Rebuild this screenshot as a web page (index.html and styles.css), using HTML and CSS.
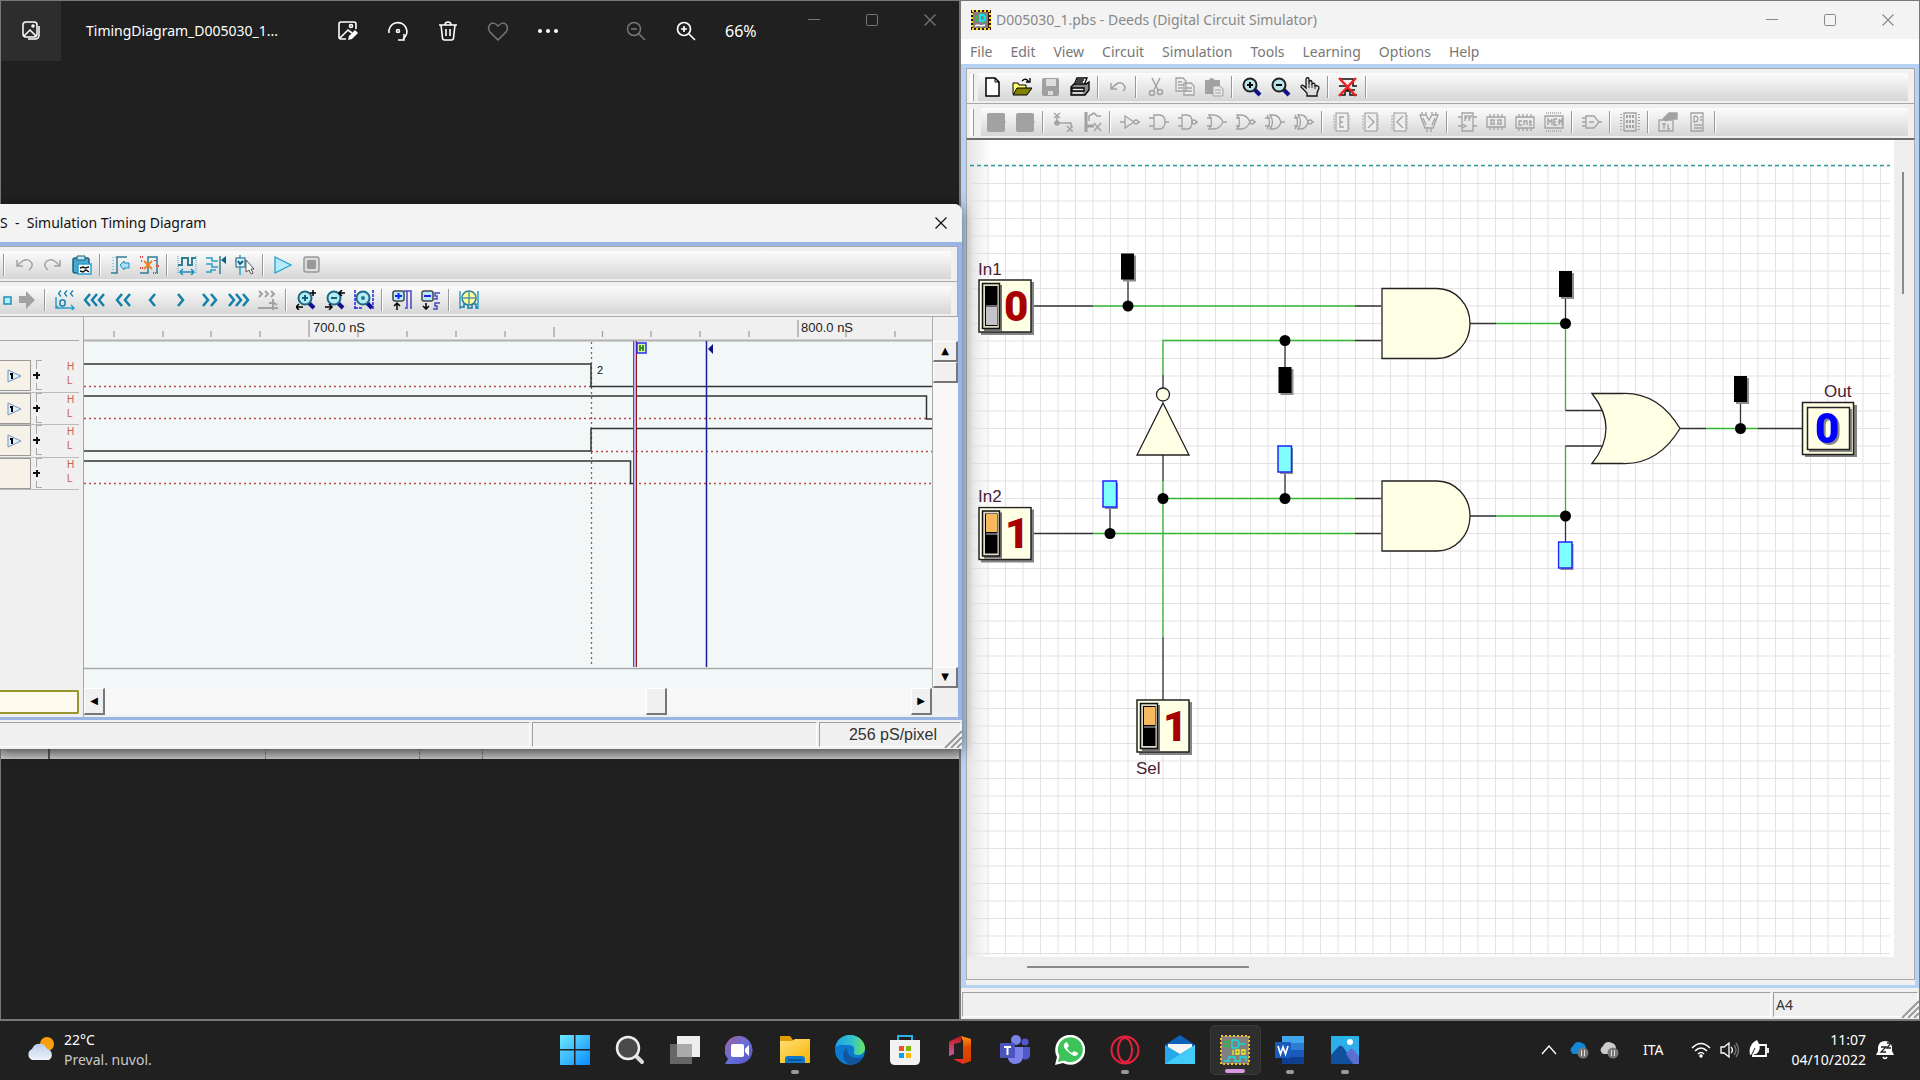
FILE: index.html
```html
<!DOCTYPE html>
<html lang="it">
<head>
<meta charset="utf-8">
<title>Deeds - Digital Circuit Simulator</title>
<link rel="stylesheet" href="styles.css">
</head>
<body>
<svg class="defs" aria-hidden="true">
  <defs>
    <linearGradient id="gBlue" x1="0" y1="0" x2="1" y2="1"><stop offset="0" stop-color="#6fe8ff"/><stop offset="1" stop-color="#0a8cff"/></linearGradient>
    <linearGradient id="gChat" x1="0" y1="0" x2="1" y2="1"><stop offset="0" stop-color="#a05f9c"/><stop offset=".5" stop-color="#6670d8"/><stop offset="1" stop-color="#5450c0"/></linearGradient>
    <linearGradient id="gFold" x1="0" y1="0" x2="1" y2="1"><stop offset="0" stop-color="#ffe07a"/><stop offset="1" stop-color="#f9b400"/></linearGradient>
    <linearGradient id="gEdge" x1="0" y1="0" x2="1" y2="0"><stop offset="0" stop-color="#1ba0e8"/><stop offset=".6" stop-color="#35c3c8"/><stop offset="1" stop-color="#6ee85a"/></linearGradient>
    <linearGradient id="gOff" x1="0" y1="0" x2="0" y2="1"><stop offset="0" stop-color="#c01818"/><stop offset="1" stop-color="#c45fa0"/></linearGradient>
    <linearGradient id="gOff2" x1="0" y1="0" x2="0" y2="1"><stop offset="0" stop-color="#ff9a10"/><stop offset=".4" stop-color="#e04800"/><stop offset="1" stop-color="#d83b01"/></linearGradient>
    <linearGradient id="gPic" x1="0" y1="0" x2="0" y2="1"><stop offset="0" stop-color="#28b4e8"/><stop offset="1" stop-color="#3aa0ee"/></linearGradient>
    <linearGradient id="gCloud" x1="0" y1="0" x2="0" y2="1"><stop offset="0" stop-color="#b8cdea"/><stop offset="1" stop-color="#eef4fb"/></linearGradient>
    <pattern id="grid" x="970" y="148" width="17.5" height="17.5" patternUnits="userSpaceOnUse"><path d="M.5 0v17.5M0 .5h17.5" stroke="#e2e2e2" fill="none"/></pattern>
    <symbol id="lens" viewBox="0 0 20 20"><path d="M12 12l6 6" stroke="#10108c" stroke-width="4"/><circle cx="8" cy="8" r="6.5" fill="#b8e4ea" stroke="#222" stroke-width="2"/></symbol>
    <symbol id="tlens" viewBox="0 0 20 20"><path d="M12 12l6 6" stroke="#10108c" stroke-width="4"/><circle cx="9" cy="8" r="6.5" fill="#b8eaf2" stroke="#1c6a86" stroke-width="2"/></symbol>
    <symbol id="blank" viewBox="0 0 20 20"><rect x="1" y="1" width="18" height="19" rx="2" fill="#a2a2a2"/><path d="M19 10h2" stroke="#a2a2a2"/></symbol>
    <symbol id="chL" viewBox="0 0 8 14"><path d="M7 1L2 7l5 6" fill="none" stroke="#1380a8" stroke-width="2.5"/></symbol>
    <symbol id="chR" viewBox="0 0 8 14"><path d="M1 1l5 6-5 6" fill="none" stroke="#1380a8" stroke-width="2.5"/></symbol>
    <symbol id="win-min" viewBox="0 0 12 12"><path d="M0 5.5h12" stroke="currentColor"/></symbol>
    <symbol id="win-max" viewBox="0 0 12 12"><rect x=".5" y=".5" width="11" height="11" rx="1" fill="none" stroke="currentColor"/></symbol>
    <symbol id="win-x" viewBox="0 0 12 12"><path d="M.5.5l11 11M11.5.5l-11 11" stroke="currentColor" stroke-width="1.2"/></symbol>
    <symbol id="grip" viewBox="0 0 18 18"><path d="M1 18L18 1M7 18L18 7M13 18l5-5" stroke="#999" stroke-width="2"/></symbol>
    <symbol id="chip" viewBox="0 0 20 20"><path d="M1 4h18M1 7h18M1 10h18M1 13h18M1 16h18" stroke="#aaa" stroke-dasharray="2 1"/><rect x="4" y="1" width="12" height="18" fill="#eee" stroke="#999"/></symbol>
    <symbol id="probe-off" viewBox="0 0 17 30"><rect x="3" y="3" width="13" height="26" fill="#8c8c8c"/><rect x="1" y="1" width="13" height="26"/></symbol>
    <symbol id="probe-on" viewBox="0 0 17 30"><rect x="3" y="3" width="13" height="26" fill="#8c8c8c"/><rect x="1" y="1" width="13.5" height="26" fill="#80ffff" stroke="#2424ff" stroke-width="1.5"/></symbol>
    <symbol id="switch" viewBox="0 0 57 57"><rect x="3" y="3" width="53" height="53" fill="#848484"/><rect x="1" y="1" width="52" height="52" fill="#ffffe6" stroke="#222" stroke-width="1.5"/><rect x="6" y="6" width="18" height="46" fill="#777"/><rect x="4.500" y="4.500" width="17" height="45" fill="#ddddc8" stroke="#111" stroke-width="1.500"/><rect x="7" y="7" width="12.500" height="40" /></symbol>
  </defs>
</svg>

<main class="desktop">
  <section class="photos" aria-label="Foto">
    <header class="photos-bar">
      <button class="photos-home" aria-label="Galleria"><svg width="20" height="20" fill="none" stroke="#fff" stroke-width="1.500"><rect x="2" y="1" width="14" height="15" rx="3"/><path d="M3 15l6-6 6 6M18 5v9q0 4-4 4H7"/><circle cx="12" cy="5" r="1"/></svg></button>
      <h1 class="photos-name">TimingDiagram_D005030_1...</h1>
      <div class="photos-tools">
        <button aria-label="Modifica"><svg width="22" height="22" fill="none" stroke="#fff" stroke-width="1.600"><path d="M19 9V4q0-2-2-2H4Q2 2 2 4v13q0 2 2 2h5M3 18l8-8 4 3"/><circle cx="14" cy="6" r="1.500"/><path d="M11 20l1-4 6-6 3 3-6 6z" fill="#fff" stroke="none"/></svg></button>
        <button aria-label="Ruota"><svg width="22" height="22" fill="none" stroke="#fff" stroke-width="1.600"><path d="M2 13a9 9 0 1 1 14 6M11 20h6v-6"/><circle cx="11" cy="11" r="1.500"/></svg></button>
        <button aria-label="Elimina"><svg width="22" height="22" fill="none" stroke="#fff" stroke-width="1.600"><path d="M2 5h18M8 5q0-3 3-3t3 3M4 5l1.500 13q.2 2 2 2h7q1.800 0 2-2L18 5M9 9v7M13 9v7"/></svg></button>
        <button class="faded" aria-label="Preferiti"><svg width="22" height="22" fill="none" stroke="currentColor" stroke-width="1.500"><path d="M11 20L3 12Q0 8 3 4.500t8 1.500q5-5 8-1.500t0 7.500z"/></svg></button>
        <button aria-label="Altro"><svg width="22" height="22" fill="#fff"><circle cx="3" cy="11" r="2"/><circle cx="11" cy="11" r="2"/><circle cx="19" cy="11" r="2"/></svg></button>
      </div>
      <div class="photos-zoom">
        <button class="faded" aria-label="Riduci"><svg width="20" height="20" fill="none" stroke="currentColor" stroke-width="1.500"><circle cx="8" cy="8" r="6.500"/><path d="M13 13l6 6M5 8h6"/></svg></button>
        <button aria-label="Ingrandisci"><svg width="20" height="20" fill="none" stroke="#fff" stroke-width="1.700"><circle cx="8" cy="8" r="6.500"/><path d="M13 13l6 6M5 8h6M8 5v6"/></svg></button>
        <span>66%</span>
      </div>
      <div class="winctl faded">
        <button aria-label="Riduci a icona"><svg width="12" height="12"><use href="#win-min"/></svg></button>
        <button aria-label="Ingrandisci"><svg width="12" height="12"><use href="#win-max"/></svg></button>
        <button aria-label="Chiudi"><svg width="12" height="12"><use href="#win-x"/></svg></button>
      </div>
    </header>
    <div class="photo-strip"><i></i><i></i><i></i><i></i></div>
  </section>

  <section class="deeds" aria-label="Deeds">
    <header class="deeds-title">
      <svg width="20" height="20"><rect width="20" height="20" fill="#3a1010"/><rect x="1" y="1" width="18" height="18" fill="none" stroke="#f4e020" stroke-width="2" stroke-dasharray="2 2"/><rect x="2" y="2" width="15" height="16" fill="#808080"/><path d="M9 5h2q3 0 3 3t-3 3H9z" fill="none" stroke="#0ee" stroke-width="2"/><path d="M4 7h3M4 10h3" stroke="#1c4" stroke-width="2"/><path d="M4 16l3-1 3 1 4-1" stroke="#fff" stroke-width="1.500" fill="none"/></svg>
      <h2>D005030_1.pbs - Deeds (Digital Circuit Simulator)</h2>
      <div class="winctl">
        <button aria-label="Minimize"><svg width="12" height="12"><use href="#win-min"/></svg></button>
        <button aria-label="Maximize"><svg width="12" height="12"><use href="#win-max"/></svg></button>
        <button aria-label="Close"><svg width="12" height="12"><use href="#win-x"/></svg></button>
      </div>
    </header>
    <nav class="menu"><button>File</button><button>Edit</button><button>View</button><button>Circuit</button><button>Simulation</button><button>Tools</button><button>Learning</button><button>Options</button><button>Help</button></nav>
    <div class="deeds-client">
      <div class="bar"><i class="handle"></i><div class="tools">
        <button aria-label="New"><svg width="20" height="20"><path d="M3 1h9l4 4v14H3z" fill="#fff" stroke="#000" stroke-width="1.500"/><path d="M12 1v4h4" fill="none" stroke="#000"/></svg></button>
        <button aria-label="Open"><svg width="20" height="20"><path d="M1 17V6h5l1 2h7v3" fill="#ffff70" stroke="#000"/><path d="M1 18l4-7h15l-5 7z" fill="#808000" stroke="#000"/><path d="M10 4q4-4 7 1M18 1v4h-4" fill="none" stroke="#000" stroke-width="1.300"/></svg></button>
        <button aria-label="Save" disabled><svg width="20" height="20"><rect x="1" y="1" width="17" height="18" rx="2" fill="#a0a0a0"/><path d="M5 2h10v7H5zM7 14h5v4H7z" fill="#ddd"/></svg></button>
        <button aria-label="Print"><svg width="20" height="20" stroke="#000" stroke-width="1.300"><path d="M4 8l3-7h10l-3 7z" fill="#fff"/><path d="M7 3h7M6 5h7"/><path d="M1 10l3-3h12l3-2v8l-4 5H1z" fill="#888"/><path d="M2 11h12v3H2z" fill="#eee"/><path d="M3 16h10" stroke="#fff"/></svg></button>
        <i class="sep"></i>
        <button aria-label="Undo" disabled><svg width="20" height="20" fill="none" stroke="#a2a2a2" stroke-width="1.500"><path d="M3 6v6h6M4 11q7-8 11-4t0 7"/></svg></button>
        <i class="sep"></i>
        <button aria-label="Cut" disabled><svg width="20" height="20" fill="none" stroke="#a2a2a2" stroke-width="1.500"><path d="M6 1l6 12M14 1L8 13"/><circle cx="6" cy="16" r="2.500"/><circle cx="14" cy="15" r="2.500"/></svg></button>
        <button aria-label="Copy" disabled><svg width="20" height="20" fill="#eee" stroke="#a2a2a2" stroke-width="1.300"><path d="M1 1h7l3 3v10H1zM9 6h7l3 3v9H9z"/><path d="M3 5h4M3 8h6M3 11h5M11 11h6M11 14h6"/></svg></button>
        <button aria-label="Paste" disabled><svg width="20" height="20"><path d="M1 3h4q2-4 6 0h5v14H1z" fill="#a2a2a2"/><path d="M9 9h7l3 3v7H9z" fill="#e8e8e8" stroke="#a2a2a2"/><path d="M11 13h6M11 16h6" stroke="#a2a2a2"/></svg></button>
        <i class="sep"></i>
        <button aria-label="Zoom in"><svg width="20" height="20"><use href="#lens"/><path d="M8 5v6M5 8h6" stroke="#000" stroke-width="2"/></svg></button>
        <button aria-label="Zoom out"><svg width="20" height="20"><use href="#lens"/><path d="M5 8h6" stroke="#000" stroke-width="2"/></svg></button>
        <button aria-label="Pan"><svg width="20" height="20"><path d="M7 19v-3L1 10q0-3 3-1l2 2V2q2-3 3 0v5-2q2-3 3 0v2q3-2 3 1v1q4-1 4 2l-2 5v3z" fill="#ddd" stroke="#111" stroke-width="1.300"/><path d="M9 7v4M12 7v4M15 8v4" stroke="#333"/></svg></button>
        <i class="sep"></i>
        <button aria-label="Stop simulation"><svg width="20" height="20" fill="none"><path d="M2 2h13v7h4M1 9h8v4h8M2 18h5v-4h5v4h7" stroke="#111" stroke-width="1.500"/><path d="M1 1l17 18M18 1L1 19" stroke="#f02020" stroke-width="2.500"/></svg></button>
        <i class="sep"></i>
      </div></div>
      <div class="bar"><i class="handle"></i><div class="tools tools-gates">
        <button aria-label="Input" disabled><svg width="20" height="20"><use href="#blank"/></svg></button>
        <button aria-label="Output" disabled><svg width="20" height="20"><use href="#blank"/></svg></button>
        <i class="sep"></i>
        <button aria-label="Wire" disabled><svg width="20" height="20" fill="none" stroke="#a2a2a2" stroke-width="1.500"><path d="M4 4v7h14v4M1 1l6 5M7 1L1 6M14 14l6 6M20 14l-6 6"/><circle cx="4" cy="11" r="2" fill="#a2a2a2"/></svg></button>
        <button aria-label="Bus" disabled><svg width="20" height="20" fill="none" stroke="#a2a2a2" stroke-width="1.500"><path d="M4 0v20M4 14h8" stroke-width="3"/><path d="M7 9V4l5-3 3 3h4M12 11l7 8M19 11l-7 8"/></svg></button>
        <i class="sep"></i>
        <button aria-label="Not" disabled><svg class="gate" width="20" height="20"><path d="M0 10h5M5 4v12l9-6zM18 10h2"/><circle cx="16" cy="10" r="2"/></svg></button>
        <button aria-label="And" disabled><svg class="gate" width="20" height="20"><path d="M0 6h5M0 14h5M5 3h5q6 0 6 7t-6 7H5zM16 10h4"/></svg></button>
        <button aria-label="Nand" disabled><svg class="gate" width="20" height="20"><path d="M0 6h4M0 14h4M4 3h5q5 0 5 7t-5 7H4zM18 10h2"/><circle cx="16" cy="10" r="2"/></svg></button>
        <button aria-label="Or" disabled><svg class="gate" width="20" height="20"><path d="M0 6h5M0 14h5M2 3h4q7 0 10 7-3 7-10 7H2q5-7 0-14zM16 10h4"/></svg></button>
        <button aria-label="Nor" disabled><svg class="gate" width="20" height="20"><path d="M0 6h4M0 14h4M1 3h4q6 0 9 7-3 7-9 7H1q5-7 0-14zM18 10h2"/><circle cx="16" cy="10" r="2"/></svg></button>
        <button aria-label="Xor" disabled><svg class="gate" width="20" height="20"><path d="M0 6h5M0 14h5M2 3q5 7 0 14M5 3h3q6 0 8 7-2 7-8 7H5q5-7 0-14zM16 10h4"/></svg></button>
        <button aria-label="Xnor" disabled><svg class="gate" width="20" height="20"><path d="M0 6h4M0 14h4M1 3q5 7 0 14M4 3h3q5 0 7 7-2 7-7 7H4q5-7 0-14zM18 10h2"/><circle cx="16" cy="10" r="2"/></svg></button>
        <i class="sep"></i>
        <button aria-label="Encoder" disabled><svg width="20" height="20"><use href="#chip"/><path class="gate" d="M12 5H8v10h4M8 10h3"/></svg></button>
        <button aria-label="Multiplexer" disabled><svg width="20" height="20"><use href="#chip"/><path class="gate" d="M7 4l6 6-6 6"/></svg></button>
        <button aria-label="Demultiplexer" disabled><svg width="20" height="20"><use href="#chip"/><path class="gate" d="M13 4l-6 6 6 6"/></svg></button>
        <button aria-label="Arithmetic" disabled><svg class="gate" width="20" height="20"><path d="M1 3h6l3 5 3-5h6l-5 13H6zM4 6l3 7M16 6l-3 7M3 0v3M7 0v3M13 0v3M17 0v3M8 17v3M12 17v3"/></svg></button>
        <i class="sep"></i>
        <button aria-label="Flip-flop" disabled><svg class="gate" width="20" height="20"><path d="M5 1h11v18H5zM1 5h4M1 14h4M16 5h4M16 14h4M8 9V4h3M8 6h2M12 9V4h3M12 6h2M5 12l4 2-4 2"/></svg></button>
        <button aria-label="Register" disabled><svg class="gate" width="20" height="20"><path d="M1 5h18v10H1zM4 2v3M8 2v3M12 2v3M16 2v3M4 15v3M8 15v3M12 15v3M16 15v3M5 8h3v4H5zM12 8h3v4h-3z"/></svg></button>
        <button aria-label="Counter" disabled><svg class="gate" width="20" height="20"><path d="M1 5h18v11H1zM4 2v3M8 2v3M12 2v3M16 2v3M4 16v3M8 16v3M12 16v3M16 16v3M7 9H4v4h3M9 13V9h3v4M15 8v5h2M14 10h3"/></svg></button>
        <button aria-label="Memory" disabled><svg class="gate" width="20" height="20"><path d="M1 4h18v12H1zM4 13V7l2 3 2-3M8 7v6M13 7h-3v6h3M10 10h2M15 13V7l1 3 2-3v6"/><path d="M2 1h16M2 19h16" stroke-dasharray="1 1"/></svg></button>
        <i class="sep"></i>
        <button aria-label="Block" disabled><svg class="gate" width="20" height="20"><path d="M4 4h8l5 6-5 6H4zM0 6h4M0 10h4M0 14h4M17 10h3M7 10h5"/></svg></button>
        <i class="sep"></i>
        <button aria-label="Finite state" disabled><svg class="gate" width="20" height="20"><path d="M4 1h12v18H4z"/><path d="M7 3v14M10 3v14M13 3v14" stroke-width="2" stroke-dasharray="3 2"/><path d="M1 2v16M19 2v16" stroke-width="2" stroke-dasharray="1 2"/></svg></button>
        <i class="sep"></i>
        <button aria-label="Test" disabled><svg class="gate" width="20" height="20"><path d="M1 8h14v11H1zM4 12h4M6 12v5M10 12v5h2"/><path d="M5 7l6-6h8v6h-7l-4 2z" fill="#a2a2a2"/></svg></button>
        <button aria-label="Document" disabled><svg class="gate" width="20" height="20"><path d="M4 1h12v18H4zM7 4v6q4 0 4-3t-4-3M13 5h2M13 8h2M7 13h8M7 16h8"/></svg></button>
        <i class="sep"></i>
      </div></div>
      <div class="work">
        <div class="sheet">
          <svg width="926" height="817" viewBox="967 140 926 817" role="img" aria-label="Circuit">
            <path d="M970 166h920v789H970z" fill="url(#grid)"/>
            <path d="M970 165.500h920" stroke="#2d9c9c" stroke-width="1.500" stroke-dasharray="4 3"/>
            <g fill="none" stroke="#32b632" stroke-width="1.300">
              <path d="M1093 306h262M1163 375v-34.500h192M1163 481v156M1163 498.500h192M1093 533.500h262M1496 323.500h69.500v87M1496 516h69.500v-70M1706 428.500h52"/>
            </g>
            <g fill="none" stroke="#333" stroke-width="1.300">
              <path d="M1032 306h61M1355 306h26M1355 340.500h26M1163 375v13M1163 455v26M1163 637v63M1355 498.500h26M1355 533.500h26M1032 533.500h61M1470 323.500h26M1470 516h26M1565.500 410.500h37M1565.500 446h37M1680 428.500h26M1758 428.500h44M1128 280v26M1285 340v27M1285 472v26M1110 507v26M1565.500 297v26M1565.500 516v26M1740.500 402v26"/>
            </g>
            <g><circle cx="1128" cy="306" r="5.500"/><circle cx="1285" cy="340.500" r="5.500"/><circle cx="1285" cy="498.500" r="5.500"/><circle cx="1163" cy="498.500" r="5.500"/><circle cx="1110" cy="533.500" r="5.500"/><circle cx="1565.500" cy="323.500" r="5.500"/><circle cx="1565.500" cy="516" r="5.500"/><circle cx="1740.500" cy="428.500" r="5.500"/></g>
            <g fill="#ffffe6" stroke="#222" stroke-width="1.300">
              <path d="M1163 403l26 52h-52z"/><circle cx="1163" cy="394.500" r="6.500"/>
              <path d="M1382 288.500h55a33 35 0 0 1 0 70h-55z"/>
              <path d="M1382 481h55a33 35 0 0 1 0 70h-55z"/>
              <path d="M1592 393.500h30Q1658 392 1680 428.500 1658 465 1622 463.500h-30Q1620 428.500 1592 393.500z"/>
            </g>
            <use href="#probe-off" x="1120" y="252.500" width="17" height="30"/>
            <use href="#probe-off" x="1277.500" y="366" width="17" height="30"/>
            <use href="#probe-off" x="1558" y="270" width="17" height="30"/>
            <use href="#probe-off" x="1733" y="375" width="17" height="30"/>
            <use href="#probe-on" x="1277" y="445" width="17" height="30"/>
            <use href="#probe-on" x="1102" y="480" width="17" height="30"/>
            <use href="#probe-on" x="1557.500" y="541" width="17" height="30"/>
            <use href="#switch" x="978" y="279" width="57" height="57"/><rect x="986" y="307" width="11" height="18" fill="#c4c4c8"/><path d="M986 306h12" stroke="#ccc"/>
            <use href="#switch" x="978" y="506.500" width="57" height="57"/><rect x="986" y="514" width="11" height="18" fill="#f8b860"/><path d="M986 534h12" stroke="#ccc"/>
            <use href="#switch" x="1136" y="699" width="57" height="57"/><rect x="1144" y="707" width="11" height="18" fill="#f8b860"/><path d="M1144 727h12" stroke="#ccc"/>
            <rect x="1805" y="405" width="52" height="52" fill="#848484"/><rect x="1802.500" y="402.500" width="51" height="52" fill="#ffffe6" stroke="#222" stroke-width="1.500"/><rect x="1809" y="409" width="43" height="43" fill="#8c8c84"/><rect x="1807.500" y="407.500" width="42" height="42" fill="#ffffe6" stroke="#222" stroke-width="1.500"/>
            <g class="digit"><text x="1004" y="321">0</text><text x="1005" y="548">1</text><text x="1163" y="741">1</text></g>
            <text class="digit digit-out" x="1815" y="443">0</text>
            <g class="label"><text x="978" y="275">In1</text><text x="978" y="502">In2</text><text x="1136" y="774">Sel</text><text x="1824" y="397">Out</text></g>
          </svg>
        </div>
        <div class="vscroll"><i></i></div>
        <div class="hscroll"><i></i></div>
      </div>
    </div>
    <footer class="status"><span></span><span class="paper">A4</span><svg width="18" height="18"><use href="#grip"/></svg></footer>
  </section>

  <section class="timing" aria-label="Simulation Timing Diagram">
    <header class="timing-title"><h2>S&nbsp; -&nbsp; Simulation Timing Diagram</h2><button aria-label="Close"><svg width="12" height="12"><use href="#win-x"/></svg></button></header>
    <div class="timing-client">
      <div class="bar"><div class="tools">
        <i class="sep"></i>
        <button aria-label="Undo" disabled><svg width="20" height="20" fill="none" stroke="#a2a2a2" stroke-width="1.500"><path d="M3 5v6h6M4 10q7-8 12-4t-1 9"/></svg></button>
        <button aria-label="Redo" disabled><svg width="20" height="20" fill="none" stroke="#a2a2a2" stroke-width="1.500"><path d="M17 5v6h-6M16 10q-7-8-12-4t1 9"/></svg></button>
        <button aria-label="Paste"><svg width="20" height="20"><rect x="1" y="3" width="16" height="15" rx="2" fill="#48a8d0" stroke="#1c607c" stroke-width="1.500"/><path d="M5 1h8v4H5z" fill="#b8e8f4" stroke="#1c607c"/><path d="M6 9h13v10H6z" fill="#fff" stroke="#28a0d0" stroke-width="1.500"/><path d="M8 13l3-1 2 1 4-1M8 16l3 1 3-2 3 2" stroke="#111" stroke-width="1.500" fill="none"/></svg></button>
        <i class="sep"></i>
        <button aria-label="Edge"><svg width="20" height="20" fill="none"><path d="M1 18h6V2h10" stroke="#307c94" stroke-width="1.500"/><path d="M10 10l4-4v2h5v5h-5v2z" fill="#a8e0f8" stroke="#1c90c0"/><path d="M3 18V2h3" stroke="#38a8d0" stroke-dasharray="1 2"/></svg></button>
        <button aria-label="Delete edge"><svg width="20" height="20" fill="none"><path d="M1 18h8V2h9v16" stroke="#307c94" stroke-width="1.500"/><path d="M5 6l8 8M13 6l-8 8" stroke="#f88020" stroke-width="2"/><path d="M1 2h4M2 6h2M16 5v2M17 11h3M1 13h3M14 18h5" stroke="#e04040" stroke-width="2" stroke-dasharray="1 1"/></svg></button>
        <i class="sep"></i>
        <button aria-label="Interval"><svg width="20" height="20" fill="none"><path d="M1 10h4V3h6v7h4V3h4" stroke="#307c94" stroke-width="2"/><path d="M1 1v18M19 1v18" stroke="#38a8d0" stroke-dasharray="1 1"/><path d="M3 17h14M6 14l-3 3 3 3M14 14l3 3-3 3" stroke="#1c90c0" stroke-width="1.500"/></svg></button>
        <button aria-label="Cursor"><svg width="20" height="20" fill="none"><path d="M0 3h6v3h6M0 9h6v3h6M0 17h5v-2h5" stroke="#28a0c8" stroke-width="1.500"/><path d="M14 1v18" stroke="#307c94" stroke-width="1.500"/><path d="M20 1v8l-5-4z" fill="#10607c"/></svg></button>
        <button aria-label="Probe"><svg width="20" height="20"><path d="M5 0v20M0 6h12" stroke="#28a0c8" stroke-width="1.500"/><rect x="1" y="3" width="9" height="9" fill="#d8f4fc" stroke="#10607c"/><path d="M3 6l2 3 3-3" fill="none" stroke="#10607c" stroke-width="2"/><path d="M11 5v12l3-2 2 4 2-1-2-4h3z" fill="#fff" stroke="#555"/></svg></button>
        <i class="sep"></i>
        <button aria-label="Run"><svg width="20" height="20"><path d="M2 2v16l16-8z" fill="#b4ecfc" stroke="#28a0c8" stroke-width="1.300"/></svg></button>
        <button aria-label="Stop" disabled><svg width="20" height="20"><rect x="2" y="2" width="15" height="15" rx="2" fill="#ddd" stroke="#999" stroke-width="1.500"/><rect x="5" y="5" width="9" height="9" rx="1" fill="#999"/></svg></button>
      </div></div>
      <div class="bar"><div class="tools tools-nav">
        <button aria-label="Back"><svg width="20" height="20"><rect x="8" y="7" width="7" height="7" fill="#b4ecfc" stroke="#1c90b0" stroke-width="1.500"/></svg></button>
        <button aria-label="Forward" disabled><svg width="20" height="20"><path d="M2 6h7V1l9 9-9 9v-6H2z" fill="#a2a2a2"/></svg></button>
        <i class="sep"></i>
        <button aria-label="To start"><svg width="20" height="20"><use href="#chL" x="2" width="5" height="7"/><use href="#chL" x="8" width="5" height="7"/><use href="#chL" x="14" width="5" height="7"/><path d="M1 7v11h18M16 15l3 3-3 3M1 18l2-2" fill="none" stroke="#28a0c8" stroke-width="1.500"/><rect x="5" y="10" width="5" height="6" rx="2" fill="none" stroke="#1380a8" stroke-width="1.500"/></svg></button>
        <button aria-label="Back three"><svg width="22" height="20"><use href="#chL" y="3" width="8" height="14"/><use href="#chL" x="7" y="3" width="8" height="14"/><use href="#chL" x="14" y="3" width="8" height="14"/></svg></button>
        <button aria-label="Back two"><svg width="16" height="20"><use href="#chL" y="3" width="8" height="14"/><use href="#chL" x="8" y="3" width="8" height="14"/></svg></button>
        <button aria-label="Back one"><svg width="8" height="20"><use href="#chL" y="3" width="8" height="14"/></svg></button>
        <button aria-label="Forward one"><svg width="8" height="20"><use href="#chR" y="3" width="8" height="14"/></svg></button>
        <button aria-label="Forward two"><svg width="16" height="20"><use href="#chR" y="3" width="8" height="14"/><use href="#chR" x="8" y="3" width="8" height="14"/></svg></button>
        <button aria-label="Forward three"><svg width="22" height="20"><use href="#chR" y="3" width="8" height="14"/><use href="#chR" x="7" y="3" width="8" height="14"/><use href="#chR" x="14" y="3" width="8" height="14"/></svg></button>
        <button aria-label="To end" disabled><svg width="20" height="20" fill="none" stroke="#a2a2a2" stroke-width="2"><path d="M1 1l3 3-3 3M7 1l3 3-3 3M13 1l3 3-3 3M0 18h20M15 9v11M11 13h5l3 2"/></svg></button>
        <i class="sep"></i>
        <button aria-label="Zoom in"><svg width="20" height="20"><use href="#tlens"/><path d="M9 5v6M6 8h6" stroke="#10607c" stroke-width="2"/><path d="M14 3h6M17 0v6M0 17h7M3 14l-3 3 3 3" stroke="#000" stroke-width="1.500" fill="none"/></svg></button>
        <button aria-label="Zoom out"><svg width="20" height="20"><use href="#tlens"/><path d="M6 8h6" stroke="#10607c" stroke-width="2"/><path d="M14 3h6M17 0l-3 3 3 3M0 17h7M4 14l3 3-3 3" stroke="#000" stroke-width="1.500" fill="none"/></svg></button>
        <button aria-label="Zoom fit"><svg width="20" height="20"><use href="#tlens"/><circle cx="9" cy="8" r="2" fill="#1c7c9c"/><path d="M1 0v20M19 0v20M1 18h8" stroke="#2020f0" stroke-width="1.500" stroke-dasharray="3 1"/></svg></button>
        <i class="sep"></i>
        <button aria-label="Taller"><svg width="20" height="20"><rect x="1" y="1" width="11" height="10" rx="2" fill="#b4ecfc" stroke="#444" stroke-width="1.500"/><path d="M6.500 3v6M3 6h7" stroke="#2020f0" stroke-width="2"/><path d="M5 20v-6M2 16l3-3 3 3" stroke="#000" stroke-width="1.500" fill="none"/><path d="M13 18h2V1h4v17h2M12 1h3" stroke="#4848c0" stroke-width="1.500" fill="none"/></svg></button>
        <button aria-label="Shorter"><svg width="20" height="20"><rect x="1" y="1" width="11" height="10" rx="2" fill="#b4ecfc" stroke="#444" stroke-width="1.500"/><path d="M3 6h7" stroke="#2020f0" stroke-width="2"/><path d="M5 13v6M2 16l3 3 3-3" stroke="#000" stroke-width="1.500" fill="none"/><path d="M13 9h3V6h-2V3h5M12 19h4v-3h-2v-3h5" stroke="#4848c0" stroke-width="1.500" fill="none"/></svg></button>
        <i class="sep"></i>
        <button aria-label="Clock grid"><svg width="20" height="20"><path d="M1 1v18M19 1v18" stroke="#28a0c8" stroke-width="1.500"/><path d="M1 17h4v-3h4v4h4v-4h4v4h2" stroke="#1380a8" stroke-width="1.500" fill="none"/><circle cx="10" cy="8" r="7" fill="#ffff98" stroke="#307c94" stroke-width="1.500"/><path d="M10 1v14M3 8h14" stroke="#5498a8" stroke-width="1.500"/></svg></button>
      </div></div>
      <div class="timing-body">
        <div class="channels">
          <div class="channels-top"></div>
          <div class="channel"><span class="name"><svg width="16" height="16"><path d="M1 2v12l13-6z" fill="#d8f4fc" stroke="#7890b8"/><path d="M3 6h2v5" fill="none" stroke="#000" stroke-width="2"/></svg></span><i class="plus"></i><span class="hl">H<br>L</span></div>
          <div class="channel"><span class="name"><svg width="16" height="16"><path d="M1 2v12l13-6z" fill="#d8f4fc" stroke="#7890b8"/><path d="M3 6h2v5" fill="none" stroke="#000" stroke-width="2"/></svg></span><i class="plus"></i><span class="hl">H<br>L</span></div>
          <div class="channel"><span class="name"><svg width="16" height="16"><path d="M1 2v12l13-6z" fill="#d8f4fc" stroke="#7890b8"/><path d="M3 6h2v5" fill="none" stroke="#000" stroke-width="2"/></svg></span><i class="plus"></i><span class="hl">H<br>L</span></div>
          <div class="channel"><span class="name"></span><i class="plus"></i><span class="hl">H<br>L</span></div>
          <input class="note" aria-label="Value">
        </div>
        <div class="plot">
          <svg width="848" height="371" viewBox="84 317 848 371" role="img" aria-label="Timing diagram">
            <path d="M84 317h848v23H84z" fill="#f0f0f0"/><path d="M84 340.500h848" stroke="#b0b0b0" stroke-width="2"/>
            <path d="M114 331v6M163 331v6M211 331v6M260 331v6M309 320v17M358 331v6M407 331v6M456 331v6M505 331v6M554 327v10M602.500 331v6M651 331v6M700 331v6M749 331v6M798 320v17M846 331v6M895 331v6" stroke="#a0a0a0" stroke-width="1.300"/>
            <g class="ruler"><text x="313" y="332">700.0 nS</text><text x="801" y="332">800.0 nS</text></g>
            <path d="M84 386.500h507M84 418.500h843M591 451.500h341M84 483.500h848M591.500 342v324" stroke="#b84a4a" stroke-width="1.300" stroke-dasharray="2 3" fill="none"/>
            <path d="M84 364h507v22.500h341M84 396h842.500v23h6M84 451h507v-22.500h341M84 461h546.500v22.500h6" stroke="#333" stroke-width="1.500" fill="none"/>
            <path d="M84 668.500h848" stroke="#a8a8a8" stroke-width="1.500"/>
            <path d="M635 341v326" stroke="#b8b0f0" stroke-width="2"/><path d="M633.500 341v326" stroke="#4848f8"/><path d="M636.500 341v326" stroke="#981818"/><path d="M706.500 341v326" stroke="#1c1c98" stroke-width="1.500"/>
            <rect x="637" y="343" width="9" height="10" fill="#d8f8b0" stroke="#2828f8" stroke-width="1.500"/><path d="M640 345v6M643 345v6M640 348h3" stroke="#38901c" stroke-width="2"/>
            <path d="M713 344v10l-5-5z" fill="#101088"/><text class="mark" x="597" y="374">2</text>
          </svg>
        </div>
        <div class="tv"><i class="ruler-end"></i><button aria-label="Up">▲</button><i class="thumb"></i><span></span><button aria-label="Down">▼</button></div>
        <div class="th"><button aria-label="Left">◀</button><span class="before"></span><i class="thumb"></i><span></span><button aria-label="Right">▶</button></div>
      </div>
    </div>
    <footer class="status"><span></span><span class="mid"></span><span class="scale">256 pS/pixel</span><svg width="18" height="18"><use href="#grip"/></svg></footer>
  </section>
</main>

<footer class="taskbar">
  <button class="weather"><svg width="30" height="30" viewBox="0 0 30 30"><circle cx="21" cy="9" r="7" fill="#f8a010"/><path d="M6 25a6 6 0 0 1 0-11 8 8 0 0 1 15 0 6 6 0 0 1 2 11z" fill="url(#gCloud)"/></svg><span>22°C<small>Preval. nuvol.</small></span></button>
  <nav class="apps">
    <button aria-label="Start"><svg viewBox="0 0 30 30"><path d="M0 0h14v14H0zM15.500 0H30v14H15.500zM0 15.500h14V30H0zM15.500 15.500H30V30H15.500z" fill="url(#gBlue)"/></svg></button>
    <button aria-label="Cerca"><svg viewBox="0 0 30 30"><path d="M20 20l7 7" stroke="#ddd" stroke-width="4" stroke-linecap="round"/><circle cx="13" cy="13" r="11" fill="#4a4a4a" stroke="#eee" stroke-width="2.500"/></svg></button>
    <button aria-label="Visualizzazione attività"><svg viewBox="0 0 30 30"><path d="M7 1h23v21H7z" fill="#eee"/><path d="M0 9h22v20H0z" fill="#666"/><path d="M7 9h15v13H7z" fill="#aaa"/></svg></button>
    <button aria-label="Chat"><svg viewBox="0 0 30 30"><path d="M15 1a14 14 0 1 1-3 28H0l3-5A14 14 0 0 1 15 1z" fill="url(#gChat)"/><rect x="6" y="9" width="13" height="13" rx="2" fill="#fff"/><path d="M20 14l4-4v11l-4-4z" fill="#fff"/></svg></button>
    <button class="open" aria-label="Esplora file"><svg viewBox="0 0 30 30"><path d="M0 1h10l3 4v4H0z" fill="#e09c00"/><path d="M0 6l12 0 3-2h15v24H0z" fill="url(#gFold)"/><path d="M5 28v-4q0-3 3-3h14q3 0 3 3v4z" fill="#1078c8"/><path d="M8 25h14" stroke="#0a4c90" stroke-width="1.500"/></svg></button>
    <button aria-label="Edge"><svg viewBox="0 0 30 30"><circle cx="15" cy="15" r="15" fill="#0c78d0"/><path d="M0 13C2 2 10 0 15 0c9 0 15 7 15 13 0 4-3 7-7 7s-5-2-4-4c1-3-1-6-5-6C9 10 2 9 0 13z" fill="url(#gEdge)"/><path d="M28 22c-3 5-8 8-13 8-8-4-9-12-3-18-1 8 5 13 16 10z" fill="#12559c"/></svg></button>
    <button aria-label="Store"><svg viewBox="0 0 30 30"><path d="M0 5h30v20q0 5-5 5H5q-5 0-5-5z" fill="#f2f2f2"/><path d="M8 5V1h14v4" fill="none" stroke="#28b4e8" stroke-width="2"/><path d="M9 11h5v5H9z" fill="#f25022"/><path d="M16 11h5v5h-5z" fill="#7fba00"/><path d="M9 18h5v5H9z" fill="#00a4ef"/><path d="M16 18h5v5h-5z" fill="#ffb900"/></svg></button>
    <button aria-label="Office"><svg viewBox="0 0 30 30"><path d="M16 1L5 6Q4 6 4 9v12l5-2V9l7-2z" fill="url(#gOff)"/><path d="M16 1l10 3v22l-8 3V6z" fill="url(#gOff2)"/><path d="M8 24h10v5z" fill="#f02828"/></svg></button>
    <button aria-label="Teams"><svg viewBox="0 0 30 30"><circle cx="16" cy="5" r="5" fill="#7b83eb"/><circle cx="25" cy="7" r="3.500" fill="#5059c9"/><path d="M21 12h9v9q-2 5-7 3z" fill="#5059c9"/><path d="M9 12h14v10q-1 7-8 7-5 0-7-5z" fill="#7b83eb"/><rect x="0" y="8" width="15" height="15" rx="1" fill="#4b53bc"/><path d="M4 12h7M7.500 12v8" stroke="#fff" stroke-width="2"/></svg></button>
    <button aria-label="WhatsApp"><svg viewBox="0 0 30 30"><path d="M0 30l2-8A15 15 0 1 1 8 28z" fill="#fff"/><path d="M3 27l1.500-6A12.500 12.500 0 1 1 9 25.500z" fill="#3cc45a"/><path d="M10 8q-3 3 1 7t8 6q4 0 4-3l-4-2-2 2q-4-2-5-5l2-2-2-4z" fill="#fff"/></svg></button>
    <button class="open" aria-label="Opera"><svg viewBox="0 0 30 30" fill="none" stroke="#e8203c"><circle cx="15" cy="15" r="13.500" stroke-width="2"/><ellipse cx="15" cy="15" rx="7" ry="12" stroke-width="2"/></svg></button>
    <button aria-label="Posta"><svg viewBox="0 0 30 30"><path d="M0 10L15 0l15 10v19H0z" fill="#0c60b8"/><path d="M3 9h24v10H3z" fill="#f4f4f4"/><path d="M0 10l15 9 15-9v19H0z" fill="#28a8ea"/><path d="M30 10v19H0z" fill="#44ccf8"/></svg></button>
    <button class="current" aria-label="Deeds"><svg viewBox="0 0 30 30"><path d="M1 1h28v28H1z" fill="#808080" stroke="#f4c020" stroke-width="2" stroke-dasharray="2 2"/><path d="M12 5h3q4 0 4 4t-4 4h-3zM19 9h6" fill="none" stroke="#10e0e0" stroke-width="1.300"/><path d="M4 7h4M4 11h4M9 5v8" stroke="#20c040" stroke-width="1.500"/><path d="M4 26h5v-4h6v4h5v-4h6v4" fill="none" stroke="#10e0e0" stroke-width="1.300"/><path d="M13 15v5M16 15h3v4h-3zM22 15h3v4h-3z" fill="none" stroke="#f0f020" stroke-width="1.300"/></svg></button>
    <button class="open" aria-label="Word"><svg viewBox="0 0 30 30"><path d="M7 1h22v7H7z" fill="#41a5ee"/><path d="M7 8h22v7H7z" fill="#2b7cd3"/><path d="M7 15h22v7H7z" fill="#185abd"/><path d="M7 22h22v7H7z" fill="#103f91"/><rect y="7" width="16" height="16" rx="1" fill="#185abd"/><path d="M3 11l2.500 8L8 12l2.500 7 2.500-8" fill="none" stroke="#fff" stroke-width="1.700"/></svg></button>
    <button class="open" aria-label="Foto"><svg viewBox="0 0 30 30"><rect x="1" y="1" width="28" height="28" rx="1" fill="url(#gPic)"/><circle cx="20" cy="7" r="3" fill="#fff"/><path d="M1 20l8-9q2-1 4 1l12 17H1z" fill="#10509c"/><path d="M16 19l4-5q2-1 4 1l5 7v7h-6z" fill="#5c70d0"/></svg></button>
  </nav>
  <div class="tray">
    <button aria-label="Icone nascoste"><svg width="16" height="16" fill="none" stroke="#fff" stroke-width="1.300"><path d="M1 12l7-8 7 8"/></svg></button>
    <button aria-label="OneDrive"><svg width="20" height="20"><path d="M4 14q-5-4 0-8 3-6 9-3 4 1 4 6v5z" fill="#1488d8"/><circle cx="14" cy="13" r="5.500" fill="#777"/><path d="M12.500 10v6M15.500 10v6" stroke="#ddd"/></svg></button>
    <button aria-label="Sincronizzazione"><svg width="20" height="20"><path d="M4 14q-5-4 0-8 3-6 9-3 4 1 4 6v5z" fill="#ccc"/><circle cx="14" cy="13" r="5.500" fill="#777"/><path d="M12.500 10v6M15.500 10v6" stroke="#ddd"/></svg></button>
    <button class="lang">ITA</button>
    <button class="quick" aria-label="Rete, volume, batteria">
      <svg width="20" height="20" fill="none" stroke="#fff" stroke-width="1.500"><path d="M1 8q9-9 18 0M4 11q6-6 12 0M7 14q3-3 6 0"/><circle cx="10" cy="16" r="1" fill="#fff"/></svg>
      <svg width="20" height="20" fill="none" stroke="#fff" stroke-width="1.300"><path d="M1 7h3l5-4v14l-5-4H1zM11 7q3 3 0 6"/><path d="M14 5q4 5 0 10M16 3q5 7 0 14" stroke="#777"/></svg>
      <svg width="20" height="20"><path d="M10 5h7v11H4v-2M19 8v5" fill="none" stroke="#fff" stroke-width="1.800"/><path d="M1 15Q-1 4 8 0q6 9-1 14z" fill="#fff"/><path d="M2 16l4-8" stroke="#202020"/></svg>
    </button>
    <button class="clock"><span>11:07</span><span>04/10/2022</span></button>
    <button aria-label="Notifiche"><svg width="20" height="20"><path d="M1 15l2-4V7q1-6 7-6t7 6v4l2 4z" fill="#fff"/><path d="M8 17q2 3 4 0" stroke="#fff" stroke-width="1.500" fill="none"/><path d="M6 7h5l-5 5h5M12 3h4l-4 5h4" stroke="#222" stroke-width="1.300" fill="none"/></svg></button>
  </div>
</footer>
</body>
</html>
```
FILE: styles.css
```css
* { box-sizing: border-box; }
body {
  margin: 0;
  height: 100vh;
  display: flex;
  flex-direction: column;
  overflow: hidden;
  background: #202020;
  font: 14px/20px "Noto Sans", "Open Sans", sans-serif;
}
button {
  border: 0;
  margin: 0;
  padding: 0;
  background: none;
  color: inherit;
  font: inherit;
  display: flex;
  align-items: center;
  justify-content: center;
}
svg { display: block; flex: none; }
h1, h2 { margin: 0; font-size: 14px; font-weight: 400; white-space: pre; }
.defs { position: absolute; width: 0; height: 0; }

.desktop {
  flex: 1;
  min-height: 0;
  display: grid;
  grid-template-columns: 1fr 1fr;
  position: relative;
}

/* Window buttons */
.winctl { display: flex; margin-left: auto; }
.winctl button { width: 58px; height: 38px; }
.faded { color: #777; }

/* Photo viewer */
.photos {
  background: #202020;
  border: 1px solid #777;
  border-width: 1px 1px 2px;
  color: #fff;
}
.photos-bar { display: flex; height: 60px; align-items: center; }
.photos-home { width: 60px; height: 60px; background: #2d2d2d; }
.photos-name { margin-left: 25px; width: 237px; }
.photos-tools { display: flex; }
.photos-tools button { width: 50px; height: 40px; }
.photos-zoom { display: flex; align-items: center; margin-left: 38px; }
.photos-zoom button { width: 50px; height: 40px; }
.photos-zoom span { margin-left: 14px; font-size: 16px; }
.photos .winctl { align-self: flex-start; }
.photo-strip {
  display: grid;
  grid-template-columns: 49px 216px 154px 63px;
  height: 11px;
  margin-top: 687px;
  background: linear-gradient(#989898, #c4c4c4);
}
.photo-strip i { border-right: 1px dashed #777; }
.photo-strip i:first-child { border-right: 2px solid #555; }

/* Circuit editor */
.deeds {
  display: flex;
  flex-direction: column;
  min-width: 0;
  background: #f0f0f0;
  border: 1px solid #777;
  border-width: 1px 1px 2px;
  color: #777;
}
.deeds-title { display: flex; align-items: center; height: 38px; padding: 0 2px 0 10px; background: #f3f3f3; }
.deeds-title h2 { margin-left: 5px; color: #888; }
.deeds-title .winctl { color: #888; }
.menu { display: flex; height: 25px; background: #fff; }
.menu button { padding: 0 9px; }
.deeds-client {
  flex: 1;
  min-height: 0;
  display: flex;
  flex-direction: column;
  border: solid #b6d2f2;
  border-width: 4px 4px 3px 5px;
}
.bar {
  display: flex;
  align-items: center;
  height: 35px;
  flex: none;
  padding: 2px 6px 0 3px;
  border: 1px solid #a8a8a8;
  border-bottom: 0;
  background: #f0f0f0;
}
.handle { width: 4px; height: 27px; margin-right: 4px; border-right: 1px solid #999; background: #fff; }
.tools {
  flex: 1;
  min-width: 0;
  height: 28px;
  display: flex;
  align-items: center;
  background: linear-gradient(#fcfcfc, #d6d6d6);
}
.tools button { width: 29px; height: 28px; flex: none; }
.sep { width: 2px; height: 22px; margin: 0 4px 0 3px; flex: none; border-left: 1px solid #999; border-right: 1px solid #fff; }
.tools-gates { margin-left: 3px; }
.gate { fill: none; stroke: #a2a2a2; stroke-width: 1.3px; }
.work {
  flex: 1;
  min-height: 0;
  display: grid;
  grid-template: 1fr 22px / 1fr 20px;
  margin-bottom: 5px;
  border: 1px solid #aaa;
  border-top: 2px solid #6c6c6c;
  background: #eee;
}
.sheet { overflow: hidden; min-width: 0; background: linear-gradient(90deg, #e4e4e4, #fff 24px); }
.vscroll { padding: 32px 8px; }
.vscroll i { display: block; width: 2px; height: 122px; background: #8a8a8a; }
.hscroll { padding: 9px 60px; }
.hscroll i { display: block; width: 222px; height: 2px; background: #8a8a8a; }
.label { font: 17px "Liberation Sans", sans-serif; fill: #4a1c34; }
.digit { font: 900 42px Roboto, "Liberation Sans", sans-serif; fill: #a80000; }
.digit-out { fill: #00f; filter: drop-shadow(2px 2px 0 #888); }

.status {
  position: relative;
  display: flex;
  gap: 2px;
  height: 31px;
  padding: 4px 1px 2px 1px;
  background: #f0f0f0;
  color: #333;
}
.status span { flex: 1; border: 1px solid #a0a0a0; border-right-color: #fff; border-bottom-color: #fff; line-height: 24px; padding-left: 2px; }
.status .paper { flex: 0 0 145px; }
.status svg { position: absolute; right: 0; bottom: 1px; }

/* Timing diagram window */
.timing {
  position: absolute;
  left: 0;
  top: 204px;
  width: calc(50% + 2px);
  display: flex;
  flex-direction: column;
  border-radius: 0 8px 0 0;
  background: #f0f0f0;
  box-shadow: 0 2px 14px #0008;
  overflow: hidden;
}
.timing-title { display: flex; justify-content: space-between; height: 38px; align-items: center; background: #f3f3f3; color: #111; }
.timing-title button { width: 43px; height: 38px; }
.timing-client { border: solid #9ab4e4; border-width: 4px 4px 3px 0; }
.timing .bar { padding-left: 0; border-left: 0; }
.timing .tools-nav button:first-child { width: 12px; overflow: hidden; }
.timing-body {
  display: grid;
  grid-template: 371px 29px / 84px 1fr 26px;
  border-top: 1px solid #a8a8a8;
}
.channels { grid-row: 1 / 3; border-right: 1px solid #a8a8a8; padding-right: 4px; display: flex; flex-direction: column; }
.channels-top { height: 43px; flex: none; background: linear-gradient(#aaa, #aaa) 0 23px / 100% 1px no-repeat; }
.channel { height: 32px; display: flex; align-items: flex-start; border-bottom: 1px solid #bbb; }
.channel:nth-child(even) { height: 33px; }
.channel .name { width: 31px; height: 31px; display: flex; align-items: center; justify-content: flex-end; padding-right: 7px; background: #f7f2e8; border: 1px solid #999; border-left: 0; }
.plus {
  width: 11px;
  height: 30px;
  background:
    linear-gradient(#111, #111) 50% 50% / 7px 2px no-repeat,
    linear-gradient(#111, #111) 50% 50% / 2px 7px no-repeat,
    linear-gradient(#aaa, #aaa) 50% 0 / 1px 9px no-repeat,
    linear-gradient(#aaa, #aaa) 50% 100% / 1px 7px no-repeat,
    linear-gradient(#aaa, #aaa) 100% 0 / 6px 1px no-repeat,
    linear-gradient(#aaa, #aaa) 100% 100% / 6px 1px no-repeat;
}
.hl { margin-left: 25px; font: 10px/14px "Liberation Sans", sans-serif; color: #c8604c; }
.note { width: 100%; height: 24px; margin: auto 0 3px; border: 2px solid #96962c; border-left: 0; border-radius: 0 2px 2px 0; background: #fffaee; }
.plot { overflow: hidden; background: #f2f8f8; }
.ruler { font: 13px "Liberation Sans", sans-serif; fill: #222; }
.mark { font: 11px "Liberation Sans", sans-serif; fill: #111; }
.tv { display: flex; flex-direction: column; background: #f8f8f8; border-left: 1px solid #aaa; }
.ruler-end { height: 24px; background: #f0f0f0; }
.tv span, .th span { flex: 1; }
.tv button, .th button, .thumb {
  background: #f0f0f0;
  border: 1px solid #fff;
  border-right: 2px solid #777;
  border-bottom: 2px solid #777;
  color: #000;
  font: 10px/10px "DejaVu Sans", sans-serif;
}
.tv button, .tv .thumb { height: 21px; }
.th { display: flex; height: 27px; background: #f8f8f8; }
.th button, .th .thumb { width: 21px; height: 27px; }
.th .before { flex: 0 0 541px; }
.timing .status { height: 29px; padding: 2px 1px 2px 0; }
.timing .status span:first-child { flex: 0 0 530px; border-left: 0; }
.timing .status .scale { flex: 0 0 142px; font: 16px/24px "Liberation Sans", sans-serif; text-align: right; padding-right: 23px; }

/* Taskbar */
.taskbar {
  flex: none;
  height: 60px;
  display: grid;
  grid-template-columns: 1fr auto 1fr;
  align-items: center;
  background: #202020;
  color: #fff;
}
.weather { justify-content: flex-start; padding-left: 26px; gap: 8px; text-align: left; }
.weather small { display: block; font-size: 14px; color: #c8c8c8; }
.apps { display: flex; }
.apps button { width: 55px; height: 50px; position: relative; }
.apps svg { width: 30px; height: 30px; }
.apps .current { width: 51px; margin: 0 2px; border-radius: 5px; background: #2e2e2e; border: 1px solid #3a3a3a; }
.apps .open::after, .apps .current::after {
  content: "";
  position: absolute;
  bottom: 1px;
  left: calc(50% - 4px);
  width: 8px;
  height: 4px;
  border-radius: 2px;
  background: #9a9a9a;
}
.apps .current::after { left: calc(50% - 10px); width: 20px; background: #d99ae0; }
.tray { display: flex; justify-content: flex-end; align-items: center; padding-right: 20px; }
.tray > button { min-width: 30px; height: 50px; }
.tray .lang { padding: 0 24px 0 19px; }
.tray .quick { gap: 9px; padding: 0 3px; }
.tray .clock { flex-direction: column; align-items: flex-end; padding: 0 4px 0 20px; }
```
